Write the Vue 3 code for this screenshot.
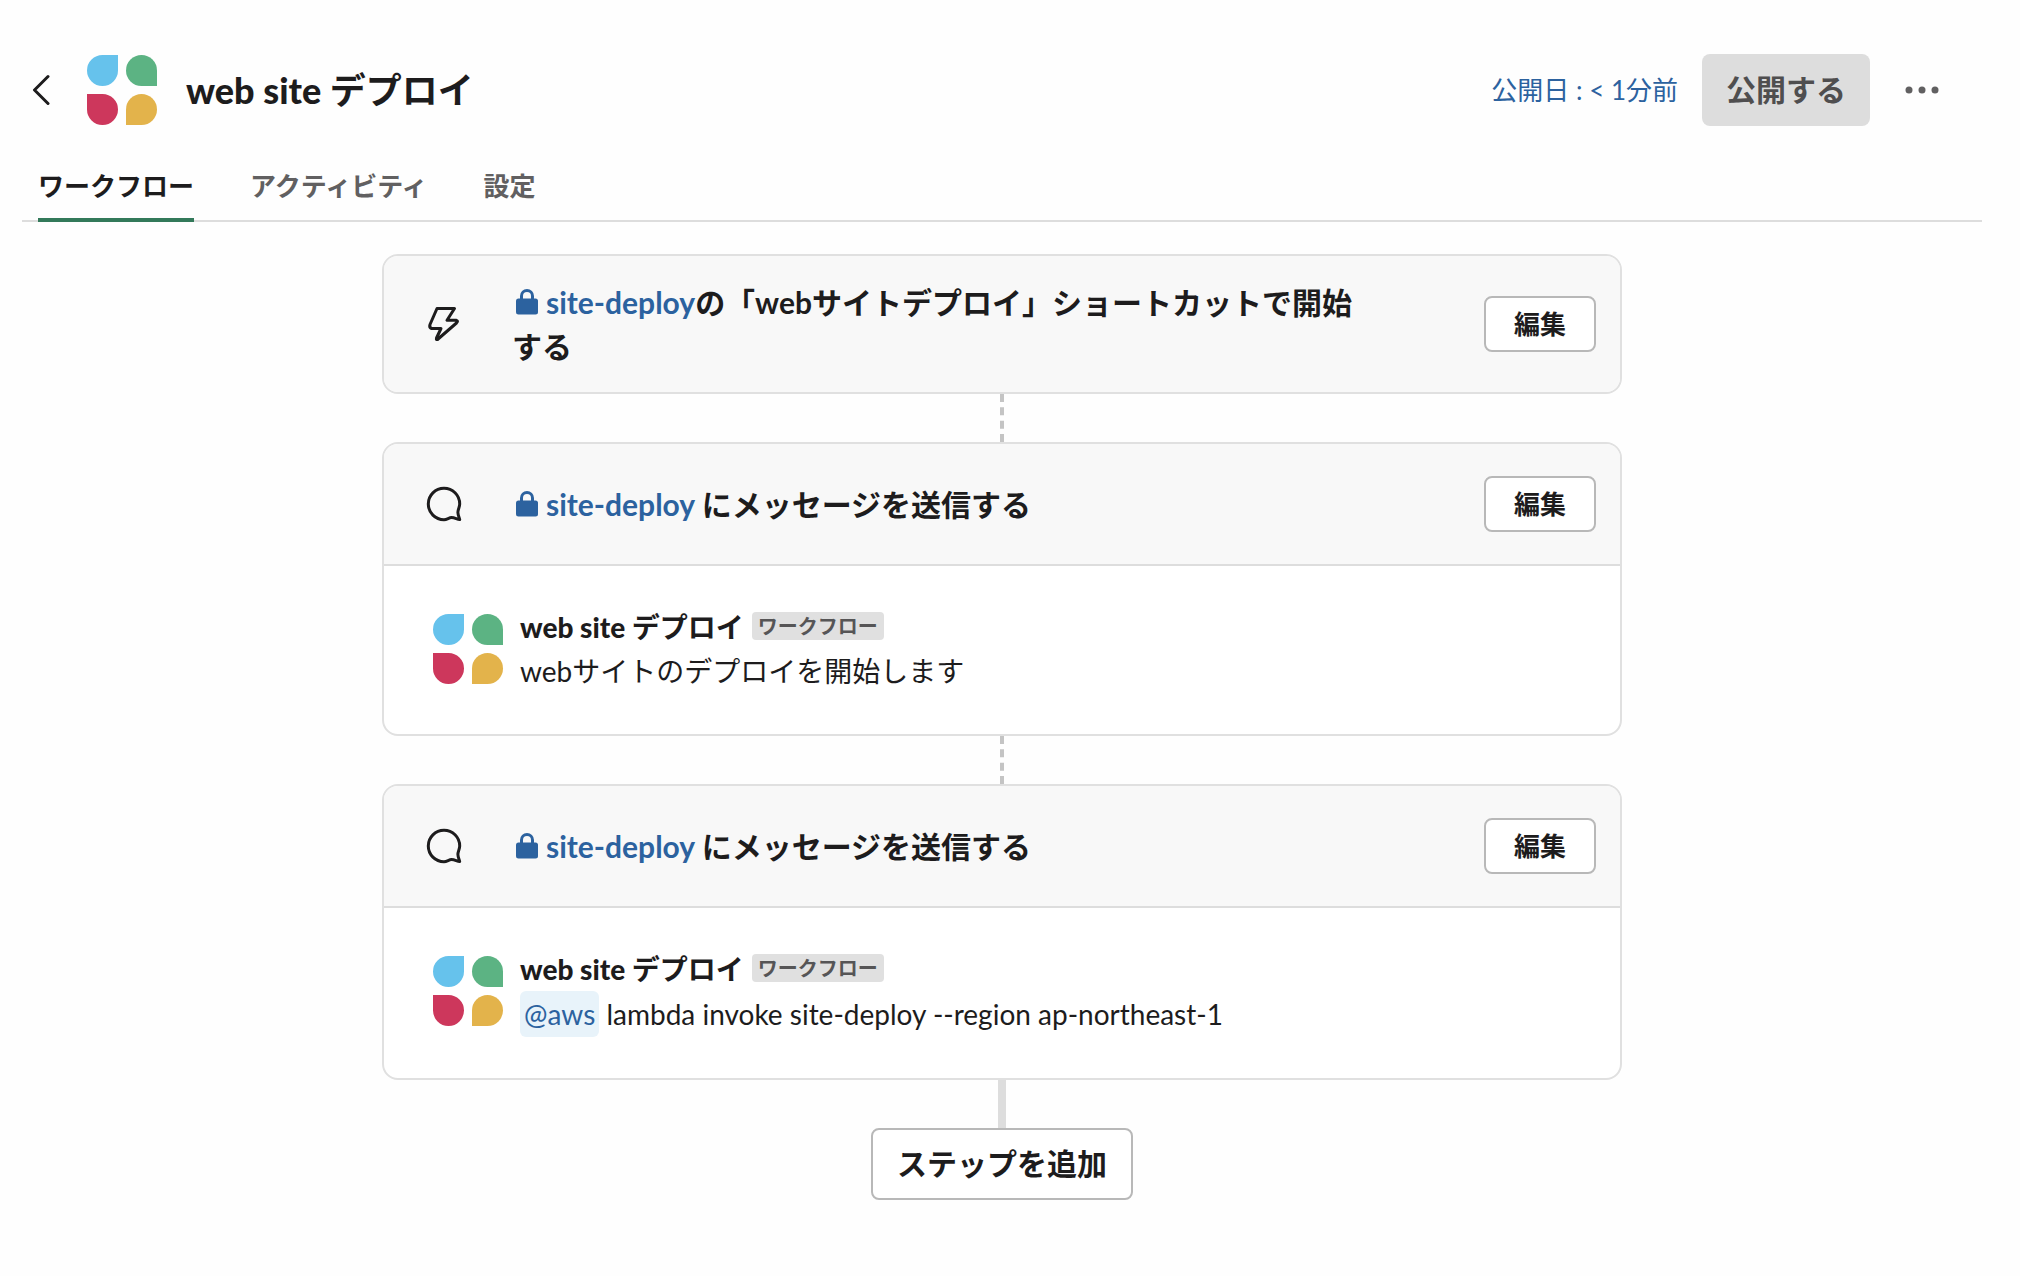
<script setup>
import { h } from 'vue'

const workflowName = 'web site デプロイ'

const tabs = [
  { label: 'ワークフロー', active: true },
  { label: 'アクティビティ', active: false },
  { label: '設定', active: false },
]

const steps = [
  { icon: 'bolt', channel: 'site-deploy', text: 'の「webサイトデプロイ」ショートカットで開始する' },
  { icon: 'bubble', channel: 'site-deploy', text: ' にメッセージを送信する', message: 'webサイトのデプロイを開始します' },
  {
    icon: 'bubble',
    channel: 'site-deploy',
    text: ' にメッセージを送信する',
    mention: '@aws',
    message: ' lambda invoke site-deploy --region ap-northeast-1',
  },
]

const Petals = () =>
  h('svg', { viewBox: '0 0 72 72', width: 72, height: 72, 'aria-hidden': 'true' }, [
    h('path', { fill: '#66c2ec', d: 'M32 1v15.500a15.500 15.500 0 1 1-15.500-15.500z' }),
    h('path', { fill: '#5cb383', d: 'M71 32H55.500A15.500 15.500 0 1 1 71 16.500z' }),
    h('path', { fill: '#cd375c', d: 'M1 40h15.500A15.500 15.500 0 1 1 1 55.500z' }),
    h('path', { fill: '#e3b34b', d: 'M40 71V55.500A15.500 15.500 0 1 1 55.500 71z' }),
  ])
</script>

<template>
  <div class="page">
    <header class="header">
      <button class="back" type="button" aria-label="戻る">
        <svg viewBox="0 0 18 32" width="18" height="32" aria-hidden="true">
          <path d="M16 2.500 2.500 16 16 29.500" fill="none" stroke="currentColor" stroke-width="3" stroke-linecap="round" stroke-linejoin="round" />
        </svg>
      </button>
      <Petals />
      <h1 class="title">{{ workflowName }}</h1>
      <a class="published" href="#">公開日 : &lt; 1分前</a>
      <button class="publish" type="button" disabled>公開する</button>
      <button class="more" type="button" aria-label="その他">
        <svg viewBox="0 0 36 8" width="36" height="8" fill="currentColor" aria-hidden="true">
          <circle cx="5" cy="4" r="3.500" /><circle cx="18" cy="4" r="3.500" /><circle cx="31" cy="4" r="3.500" />
        </svg>
      </button>
    </header>

    <nav class="tabs">
      <a v-for="tab in tabs" :key="tab.label" href="#" class="tab" :class="{ active: tab.active }">{{ tab.label }}</a>
    </nav>

    <main class="flow">
      <template v-for="(step, i) in steps" :key="i">
        <div v-if="i > 0" class="link-dashed"></div>
        <section class="card">
          <div class="card-head">
            <svg v-if="step.icon === 'bolt'" class="step-icon" viewBox="0 0 40 40" width="40" height="40" aria-hidden="true">
              <path d="M13 4.500H30.500L23 16.300H32.500Q34.500 17 32.500 19L13.500 35.500Q12 36 12.500 34L17 24.500H7.500Q5 23.500 6 20.500Z" />
            </svg>
            <svg v-else class="step-icon" viewBox="0 0 40 40" width="40" height="40" aria-hidden="true">
              <path d="M20 4.300C28.500 4.300 35.700 11 35.700 20C35.700 23 33.800 25.500 33.900 28.500C34 31.500 35.500 34 35.700 35.500C33 35.500 31 33.500 27.500 33.500C25 33.500 23 35.700 20 35.700A15.700 15.700 0 0 1 20 4.300Z" />
            </svg>
            <h2 class="card-title"><a class="channel" href="#"><svg class="lock" viewBox="0 0 22 26" width="22" height="26" aria-hidden="true"><path d="M5.500 12V7a5.500 5.500 0 0 1 11 0v5" fill="none" stroke="currentColor" stroke-width="3" /><rect x="0" y="9.500" width="22" height="16" rx="2.500" fill="currentColor" /></svg>{{ step.channel }}</a>{{ step.text }}</h2>
            <button class="edit" type="button">編集</button>
          </div>
          <div v-if="step.message" class="card-body">
            <Petals class="avatar" />
            <div class="message">
              <div class="sender">
                <strong class="name">{{ workflowName }}</strong>
                <span class="badge">ワークフロー</span>
              </div>
              <p class="text"><a v-if="step.mention" class="mention" href="#">{{ step.mention }}</a>{{ step.message }}</p>
            </div>
          </div>
        </section>
      </template>
      <div class="link-solid"></div>
      <button class="add" type="button">ステップを追加</button>
    </main>
  </div>
</template>

<style>
body {
  margin: 0;
  background: #fefefe;
}
</style>

<style scoped>
.page {
  padding: 54px 38px 76px 22px;
  font-family: Lato, "Noto Sans CJK JP", sans-serif;
  color: #1d1c1d;
}
button {
  font: inherit;
  color: inherit;
  margin: 0;
  cursor: pointer;
}
a {
  color: #2c629f;
  text-decoration: none;
}
.header {
  display: flex;
  align-items: center;
  min-height: 72px;
}
.back,
.more {
  display: flex;
  padding: 0;
  border: 0;
  background: none;
}
.back {
  padding: 0 36px 0 10px;
}
.title,
.name {
  font-family: "Lato Black", Lato, "Noto Sans CJK JP", sans-serif;
  font-weight: 700;
}
.title {
  flex: 1;
  margin: 0 0 0 28px;
  font-size: 36px;
  line-height: 48px;
}
.published {
  font-size: 26px;
  line-height: 40px;
}
.publish {
  height: 72px;
  margin-left: 24px;
  padding: 0 24px 4px;
  border: 0;
  border-radius: 8px;
  background: #ddd;
  color: #4f4e4f;
  font-size: 30px;
  font-weight: 700;
}
.more {
  margin: 0 42px 0 34px;
  color: #616061;
}
.tabs {
  display: flex;
  gap: 56px;
  margin-top: 32px;
  padding-left: 16px;
  box-shadow: inset 0 -2px #ddd;
}
.tab {
  padding: 10px 0 14px;
  border-bottom: 4px solid transparent;
  color: #616061;
  font-size: 26px;
  line-height: 36px;
  font-weight: 700;
}
.tab.active {
  border-color: #33795a;
  color: #1d1c1d;
}
.flow {
  display: flex;
  flex-direction: column;
  align-items: center;
  padding-top: 32px;
}
.card {
  box-sizing: border-box;
  width: 100%;
  max-width: 1240px;
  border: 2px solid #e0e0e0;
  border-radius: 16px;
  background: #fff;
  overflow: hidden;
}
.card-head {
  display: flex;
  align-items: center;
  min-height: 72px;
  padding: 24px 24px 24px 40px;
  background: #f8f8f8;
}
.card-head:not(:last-child) {
  border-bottom: 2px solid #ddd;
}
.step-icon {
  flex: none;
  fill: none;
  stroke: #1d1c1d;
  stroke-width: 3;
  stroke-linejoin: round;
}
.card-title {
  flex: 1;
  margin: 0 110px 0 48px;
  font-size: 30px;
  line-height: 44px;
  font-weight: 700;
}
.lock {
  margin: 0 8px 0 4px;
  vertical-align: -1px;
}
.edit {
  height: 56px;
  padding: 0 28px 4px;
  border: 2px solid #b8b8b8;
  border-radius: 8px;
  background: #fff;
  font-size: 26px;
  font-weight: 700;
}
.card-body {
  display: flex;
  gap: 16px;
  padding: 39px 48px 41px;
}
.avatar {
  flex: none;
  margin-top: 8px;
}
.sender {
  display: flex;
  align-items: center;
  gap: 8px;
}
.name {
  font-size: 28px;
  line-height: 44px;
}
.badge {
  margin-bottom: 2px;
  padding: 0 6px;
  border-radius: 4px;
  background: #e0e0e0;
  color: #565556;
  font-size: 20px;
  line-height: 28px;
  font-weight: 700;
}
.text {
  margin: 0;
  font-size: 28px;
  line-height: 44px;
}
.mention {
  display: inline-block;
  padding: 0 4px;
  border-radius: 6px;
  background: #e8f3fa;
  line-height: 46px;
}
.link-dashed {
  height: 48px;
  border-left: 4px dashed #c4c4c4;
}
.link-solid {
  width: 8px;
  height: 48px;
  background: #ddd;
}
.add {
  height: 72px;
  padding: 0 24px 4px;
  border: 2px solid #b8b8b8;
  border-radius: 8px;
  background: #fff;
  font-size: 30px;
  font-weight: 700;
}
</style>
